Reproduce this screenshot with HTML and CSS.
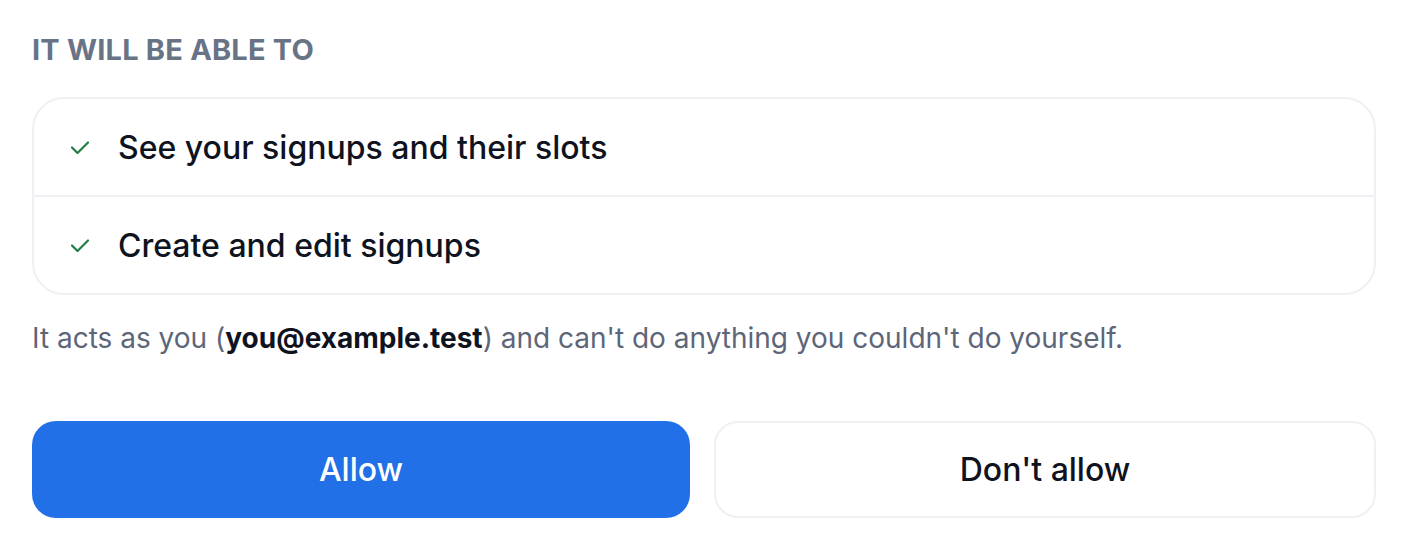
FILE: index.html
```html
<!DOCTYPE html>
<html lang="en">
<head>
    <meta charset="UTF-8">
    <meta name="viewport" content="width=device-width, initial-scale=1.0">
    <title>Authorize</title>
    <link rel="stylesheet" href="styles.css">
</head>
<body>
    <div class="consent">
        <h2 class="scope-title">It will be able to</h2>

        <ul class="scope-list">
            <li class="scope-item">
                <svg class="check" viewBox="0 0 24 24" width="24" height="24">
                    <path d="M4 12.5l5.5 5.5L20 7.5" fill="none" stroke="currentColor" stroke-width="2.2" stroke-linecap="round" stroke-linejoin="round"/>
                </svg>
                <span>See your signups and their slots</span>
            </li>
            <li class="scope-item">
                <svg class="check" viewBox="0 0 24 24" width="24" height="24">
                    <path d="M4 12.5l5.5 5.5L20 7.5" fill="none" stroke="currentColor" stroke-width="2.2" stroke-linecap="round" stroke-linejoin="round"/>
                </svg>
                <span>Create and edit signups</span>
            </li>
        </ul>

        <p class="note">It acts as you (<strong>you@example.test</strong>) and can't do anything you couldn't do yourself.</p>

        <div class="actions">
            <button class="btn btn-allow">Allow</button>
            <button class="btn btn-deny">Don't allow</button>
        </div>
    </div>
</body>
</html>
```

FILE: styles.css
```css
body {
    font-family: Inter, "Noto Sans", sans-serif;
    margin: 0;
    padding: 32px 32px;
    background-color: #ffffff;
    color: #0f1320;
}
.scope-title {
    margin: 0 0 29px;
    font-size: 29px;
    line-height: 36px;
    font-weight: 700;
    letter-spacing: 0.2px;
    text-transform: uppercase;
    color: #697386;
}
.scope-list {
    list-style: none;
    margin: 0;
    padding: 0;
    border: 2px solid #eef0f4;
    border-radius: 32px;
}
.scope-item {
    display: flex;
    align-items: center;
    gap: 26px;
    height: 96px;
    padding: 0 34px;
    font-size: 32px;
    font-weight: 500;
}
.scope-item + .scope-item {
    border-top: 2px solid #eef0f4;
}
.check {
    color: #1f7d45;
    flex-shrink: 0;
}
.note {
    margin: 22px 0 0;
    font-size: 28px;
    line-height: 42px;
    color: #5d6678;
}
.note strong {
    color: #0f1320;
    font-weight: 700;
}
.actions {
    display: flex;
    gap: 24px;
    margin-top: 62px;
}
.btn {
    flex: 1;
    height: 97px;
    font-family: inherit;
    font-size: 32px;
    font-weight: 500;
    border-radius: 24px;
    cursor: pointer;
}
.btn-allow {
    background-color: #2170e8;
    color: #ffffff;
    border: none;
}
.btn-deny {
    background-color: #ffffff;
    color: #0f1320;
    border: 2px solid #eef0f4;
}
```
